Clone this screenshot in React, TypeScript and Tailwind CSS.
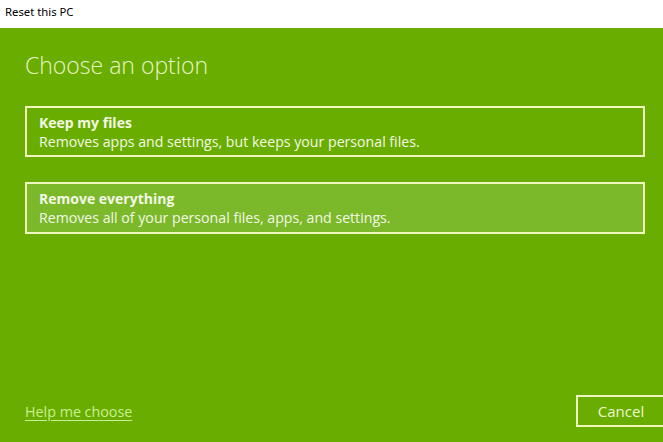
import React from "react";

export default function App() {
  return (
    <div className="w-[663px] h-[442px] overflow-hidden flex flex-col bg-[#6aad01]" style={{ fontFamily: '"Open Sans", "Noto Sans", sans-serif' }}>
      <div className="h-[28px] bg-white flex items-center pl-[5px] pb-[4px] text-[11.3px] text-black shrink-0" style={{ fontFamily: '"Noto Sans", sans-serif' }}>
        Reset this PC
      </div>
      <div className="flex-1 flex flex-col px-[25px]">
        <div className="mt-[20px] text-[23px] font-light leading-[34px] text-[#e8f4c8]">Choose an option</div>
        <div className="mt-[24px] w-[620px] h-[51px] border-2 border-[#f1f6bd] flex flex-col justify-center pl-[12px] text-[#f3f9e4]">
          <div className="text-[14px] font-bold leading-[19px]">Keep my files</div>
          <div className="text-[14.15px] leading-[19px]">Removes apps and settings, but keeps your personal files.</div>
        </div>
        <div className="mt-[25px] w-[620px] h-[52px] border-2 border-[#f1f6bd] bg-[#7bb82a] flex flex-col justify-center pl-[12px] text-[#f3f9e4]">
          <div className="text-[14px] font-bold leading-[19px]">Remove everything</div>
          <div className="text-[14.15px] leading-[19px]">Removes all of your personal files, apps, and settings.</div>
        </div>
        <div className="flex-1" />
        <div className="flex items-center justify-between mb-[15px]">
          <a className="text-[14.3px] text-[#c9f08e] underline underline-offset-[3px] mt-[1px]">Help me choose</a>
          <div className="w-[90px] h-[32px] shrink-0 border-2 border-[#f1f6bd] flex items-center justify-center text-[15px] text-[#eef8cf] mr-[-28px]">Cancel</div>
        </div>
      </div>
    </div>
  );
}
